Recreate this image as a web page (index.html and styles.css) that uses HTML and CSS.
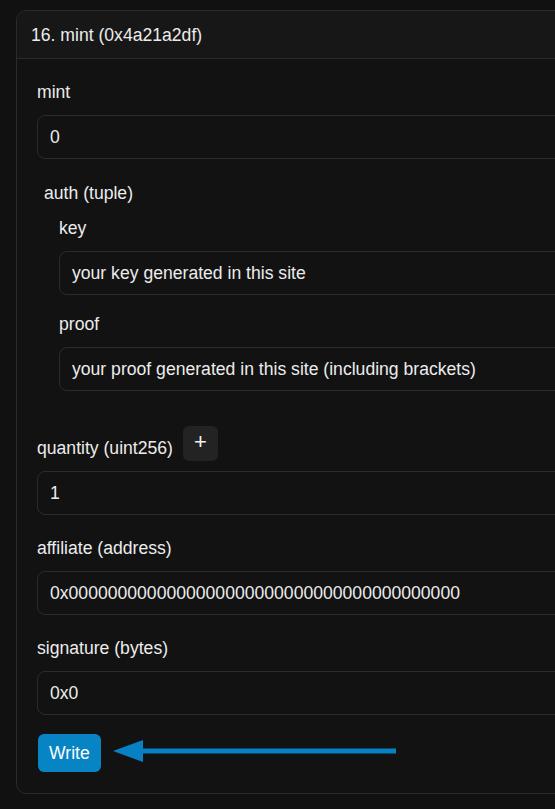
FILE: index.html
```html
<!DOCTYPE html>
<html>
<head>
<meta charset="utf-8">
<link rel="stylesheet" href="styles.css">
</head>
<body>
<div class="card">
  <div class="card-header">16. mint (0x4a21a2df)</div>
  <div class="card-body">
    <div class="field">
      <div class="label">mint</div>
      <div class="input">0</div>
    </div>
    <div class="tuple">
      <div class="label">auth (tuple)</div>
      <div class="tuple-items">
        <div class="field">
          <div class="label">key</div>
          <div class="input">your key generated in this site</div>
        </div>
        <div class="field">
          <div class="label">proof</div>
          <div class="input">your proof generated in this site (including brackets)</div>
        </div>
      </div>
    </div>
    <div class="field">
      <div class="label-row">
        <div class="label">quantity (uint256)</div>
        <button class="plus">+</button>
      </div>
      <div class="input">1</div>
    </div>
    <div class="field">
      <div class="label">affiliate (address)</div>
      <div class="input">0x0000000000000000000000000000000000000000</div>
    </div>
    <div class="field">
      <div class="label">signature (bytes)</div>
      <div class="input">0x0</div>
    </div>
    <div class="actions">
      <button class="write">Write</button>
      <svg class="arrow" width="283" height="22" viewBox="0 0 283 22">
        <path d="M0 11 L30 0 L30 22 Z" fill="#0781c3"/>
        <rect x="29" y="8.5" width="254" height="5" fill="#0781c3"/>
      </svg>
    </div>
  </div>
</div>
</body>
</html>
```

FILE: styles.css
```css
html, body {
  margin: 0;
  padding: 0;
  overflow: hidden;
  background: #111111;
}
body {
  padding: 10px 0 0 16px;
  font-family: "Liberation Sans", Arial, sans-serif;
  font-size: 17.6px;
  color: #ececec;
}
.card {
  width: 720px;
  border: 1px solid #2a2a2a;
  border-radius: 10px;
  background: #121212;
  overflow: hidden;
}
.card-header {
  background: #171717;
  border-bottom: 1px solid #2a2a2a;
  padding: 14px 14px 13px;
  line-height: 20px;
}
.card-body {
  padding: 23px 20px 21px;
  display: flex;
  flex-direction: column;
  gap: 23px;
}
.field {
  display: flex;
  flex-direction: column;
  gap: 13px;
}
.label {
  line-height: 20px;
}
.input {
  height: 42px;
  border: 1px solid #2b2b2b;
  border-radius: 8px;
  background: #121212;
  padding: 0 12px;
  display: flex;
  align-items: center;
  line-height: 20px;
  white-space: nowrap;
}
.tuple {
  margin-left: 7px;
  margin-top: 1px;
  padding-bottom: 12px;
  display: flex;
  flex-direction: column;
  gap: 15px;
}
.tuple-items {
  padding-left: 15px;
  display: flex;
  flex-direction: column;
  gap: 19px;
}
.label-row {
  display: flex;
  align-items: flex-end;
  gap: 10px;
  margin-bottom: -3px;
}
.label-row .label {
  margin-bottom: 3px;
}
.plus {
  width: 35px;
  height: 35px;
  border: none;
  border-radius: 6px;
  background: #232323;
  color: #f2f2f2;
  font-family: "Liberation Sans", Arial, sans-serif;
  font-size: 22px;
  line-height: 1;
  padding: 0 0 4px;
  display: flex;
  align-items: center;
  justify-content: center;
}
.actions {
  position: relative;
  display: flex;
  margin-top: -4px;
}
.write {
  height: 38px;
  padding: 0 11px;
  margin-left: 1px;
  border: none;
  border-radius: 6px;
  background: #0784c4;
  color: #ffffff;
  font-family: "Liberation Sans", Arial, sans-serif;
  font-size: 17.6px;
}
.arrow {
  position: absolute;
  left: 76px;
  top: 6px;
}
```
